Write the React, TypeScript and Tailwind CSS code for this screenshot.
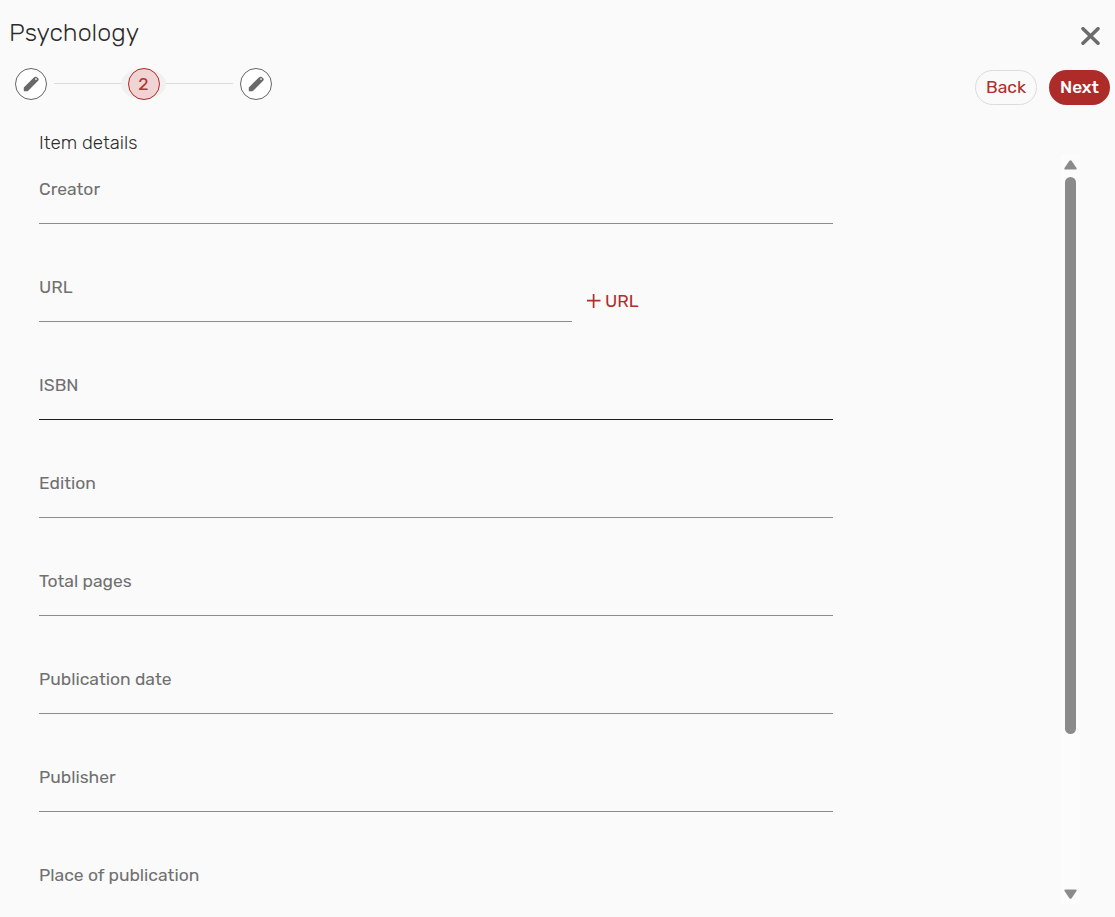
import clsx from 'clsx';

const fields = [
  { label: 'Creator' },
  { label: 'URL', action: true },
  { label: 'ISBN', active: true },
  { label: 'Edition' },
  { label: 'Total pages' },
  { label: 'Publication date' },
  { label: 'Publisher' },
  { label: 'Place of publication' },
];

function EditStep() {
  return (
    <button
      aria-label="Edit step"
      className="flex size-8 items-center justify-center rounded-full border border-[#666] bg-white"
    >
      <svg width="16" height="16" viewBox="0 0 16 16" fill="none">
        <path
          d="M.8 15.2V11.4L10.9 1.5Q12 .6 13.3.8L15.2 2.2Q16.4 3.6 14.9 5L4.7 15.2Z"
          fill="#696969"
        />
        <circle cx="13" cy="3.1" r=".9" fill="#fff" />
      </svg>
    </button>
  );
}

function Stepper() {
  return (
    <div className="flex h-8 items-center pl-[5px]">
      <EditStep />
      <div className="mb-px ml-[7px] h-px w-[67px] bg-[#dcdcdc]" />
      <div className="flex h-8 w-[45px] items-center justify-center rounded-[50%] bg-[#f1f1f1]">
        <div className="flex size-8 items-center justify-center rounded-full border border-[#b02a28] bg-[#f0d3d3] pt-px text-[17.5px] leading-none text-[#b23431]">
          2
        </div>
      </div>
      <div className="mr-[7px] mb-px h-px w-[67px] bg-[#dcdcdc]" />
      <EditStep />
    </div>
  );
}

function Scrollbar() {
  return (
    <div className="mt-[154px] flex h-[750px] w-[19px] shrink-0 flex-col items-center bg-[#fcfcfc]">
      <svg className="mt-1.5 shrink-0" width="13" height="10" viewBox="0 0 13 10">
        <path d="M5.4.7Q6.5-.4 7.6.7L12.5 8Q13 9.6 11.5 9.6H1.5Q0 9.6 .5 8Z" fill="#8b8b8b" />
      </svg>
      <div className="mt-[7px] h-[557px] w-[11px] shrink-0 rounded-full bg-[#8b8b8b]" />
      <svg className="mt-auto mb-[5px] shrink-0" width="13" height="10" viewBox="0 0 13 10">
        <path d="M5.4 9.3Q6.5 10.4 7.6 9.3L12.5 2Q13 .4 11.5 .4H1.5Q0 .4 .5 2Z" fill="#8b8b8b" />
      </svg>
    </div>
  );
}

export default function App() {
  return (
    <div className="flex h-[917px] w-[1115px] overflow-hidden bg-[#fafafa] font-[Rubik,Roboto,sans-serif] text-[#2b2b2b]">
      <div className="flex w-[965px] shrink-0 flex-col pl-2.5">
        <h1 className="mt-[17px] -ml-px h-8 text-[25px] leading-8 font-light whitespace-nowrap">
          Psychology
        </h1>
        <div className="mt-[19px]">
          <Stepper />
        </div>
        <div className="mt-[31px] ml-[29px] w-[794px]">
          <h2 className="h-6 text-[18.75px] leading-6 font-light">Item details</h2>
          {fields.map(({ label, action, active }) => (
            <div key={label} className="group flex h-[98px] items-start pt-[22px]">
              <div
                className={clsx(
                  'h-[47px] border-b group-last:border-transparent',
                  action ? 'w-[533px]' : 'w-full',
                  active ? 'border-[#1f1f1f]' : 'border-[#8c8c8c]',
                )}
              >
                <label className="block text-[17.5px] leading-6 whitespace-nowrap text-[#707070]">
                  {label}
                </label>
              </div>
              {action && (
                <button className="mt-[14px] ml-[15px] flex h-6 items-center gap-1 text-[17.5px] leading-6 text-[#b02e2b]">
                  <svg width="14" height="14" viewBox="0 0 14 14" stroke="currentColor" strokeWidth="1.7">
                    <path d="M6.6 0V14M0 6.7H13.5" />
                  </svg>
                  URL
                </button>
              )}
            </div>
          ))}
        </div>
      </div>
      <div className="flex w-[150px] shrink-0">
        <div className="flex w-full flex-col">
          <div className="flex justify-end pt-[27px] pr-[15px]">
            <button aria-label="Close">
              <svg
                width="19"
                height="18"
                viewBox="0 0 19 18"
                stroke="#6b6b6b"
                strokeWidth="3.5"
                strokeLinecap="round"
              >
                <path d="M2 1.7L17 16.3M17 1.7L2 16.3" />
              </svg>
            </button>
          </div>
          <div className="mt-[25px] flex gap-3 pl-2.5 text-[17.5px] leading-none">
            <button className="h-[35px] w-[62px] rounded-full border border-[#dcdcdc] text-[#b02e2b]">
              Back
            </button>
            <button className="h-[35px] w-[61px] rounded-full bg-[#ad2b28] text-[17.25px] font-medium text-white">
              Next
            </button>
          </div>
          <div className="-mt-[105px] pl-24">
            <Scrollbar />
          </div>
        </div>
      </div>
    </div>
  );
}
